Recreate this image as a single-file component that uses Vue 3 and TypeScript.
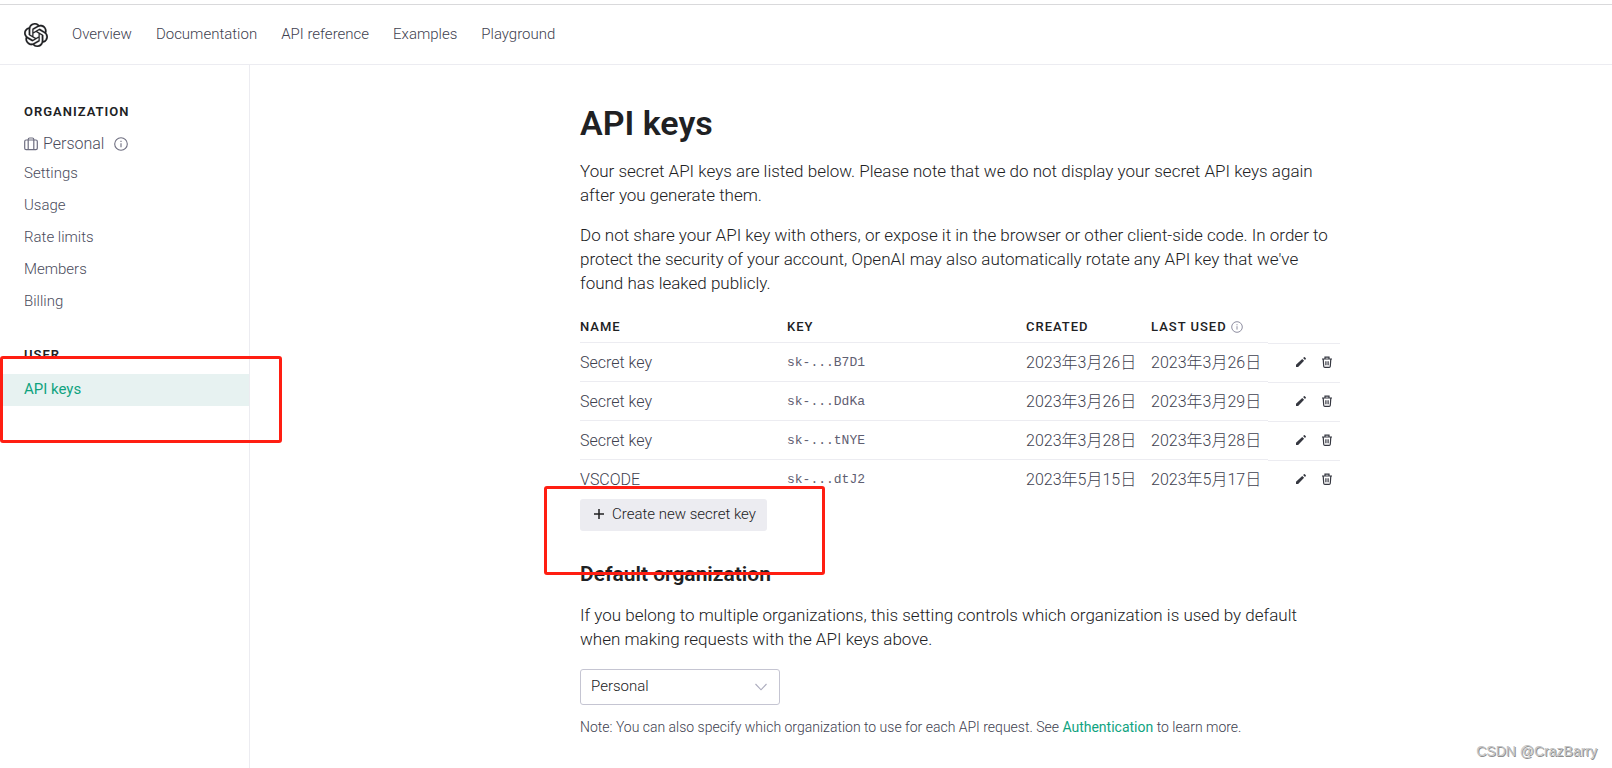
<script setup lang="ts">
import { ref } from 'vue'

interface ApiKey {
  name: string
  token: string
  created: string
  used: string
}

const navLinks: string[] = ['Overview', 'Documentation', 'API reference', 'Examples', 'Playground']
const orgLinks: string[] = ['Settings', 'Usage', 'Rate limits', 'Members', 'Billing']
const keys: ApiKey[] = [
  { name: 'Secret key', token: 'sk-...B7D1', created: '2023年3月26日', used: '2023年3月26日' },
  { name: 'Secret key', token: 'sk-...DdKa', created: '2023年3月26日', used: '2023年3月29日' },
  { name: 'Secret key', token: 'sk-...tNYE', created: '2023年3月28日', used: '2023年3月28日' },
  { name: 'VSCODE', token: 'sk-...dtJ2', created: '2023年5月15日', used: '2023年5月17日' },
]
const organization = ref<string>('Personal')
</script>

<template>
  <div class="page">
    <header class="topbar">
      <a href="#" class="logo" aria-label="OpenAI">
        <svg viewBox="0 0 24 24" width="24" height="24" fill="currentColor" stroke="currentColor" stroke-width="0.2">
          <path d="M22.2819 9.8211a5.9847 5.9847 0 0 0-.5157-4.9108 6.0462 6.0462 0 0 0-6.5098-2.9A6.0651 6.0651 0 0 0 4.9807 4.1818a5.9847 5.9847 0 0 0-3.9977 2.9 6.0462 6.0462 0 0 0 .7427 7.0966 5.98 5.98 0 0 0 .511 4.9107 6.051 6.051 0 0 0 6.5146 2.9001A5.9847 5.9847 0 0 0 13.2599 24a6.0557 6.0557 0 0 0 5.7718-4.2058 5.9894 5.9894 0 0 0 3.9977-2.9001 6.0557 6.0557 0 0 0-.7475-7.0729zm-9.022 12.6081a4.4755 4.4755 0 0 1-2.8764-1.0408l.1419-.0804 4.7783-2.7582a.7948.7948 0 0 0 .3927-.6813v-6.7369l2.02 1.1686a.071.071 0 0 1 .038.052v5.5826a4.504 4.504 0 0 1-4.4945 4.4944zm-9.6607-4.1254a4.4708 4.4708 0 0 1-.5346-3.0137l.142.0852 4.783 2.7582a.7712.7712 0 0 0 .7806 0l5.8428-3.3685v2.3324a.0804.0804 0 0 1-.0332.0615L9.74 19.9502a4.4992 4.4992 0 0 1-6.1408-1.6464zM2.3408 7.8956a4.485 4.485 0 0 1 2.3655-1.9728V11.6a.7664.7664 0 0 0 .3879.6765l5.8144 3.3543-2.0201 1.1685a.0757.0757 0 0 1-.071 0l-4.8303-2.7865A4.504 4.504 0 0 1 2.3408 7.872zm16.5963 3.8558L13.1038 8.364 15.1192 7.2a.0757.0757 0 0 1 .071 0l4.8303 2.7913a4.4944 4.4944 0 0 1-.6765 8.1042v-5.6772a.79.79 0 0 0-.407-.667zm2.0107-3.0231l-.142-.0852-4.7735-2.7818a.7759.7759 0 0 0-.7854 0L9.409 9.2297V6.8974a.0662.0662 0 0 1 .0284-.0615l4.8303-2.7866a4.4992 4.4992 0 0 1 6.6802 4.66zM8.3065 12.863l-2.02-1.1638a.0804.0804 0 0 1-.038-.0567V6.0742a4.4992 4.4992 0 0 1 7.3757-3.4537l-.142.0805L8.704 5.459a.7948.7948 0 0 0-.3927.6813zm1.0976-2.3654l2.602-1.4998 2.6069 1.4998v2.9994l-2.5974 1.4997-2.6067-1.4997Z" />
        </svg>
      </a>
      <nav class="nav">
        <a v-for="link in navLinks" :key="link" href="#">{{ link }}</a>
      </nav>
    </header>

    <div class="body">
      <aside class="sidebar">
        <h2 class="side-title">Organization</h2>
        <div class="org">
          <svg viewBox="0 0 14 14" width="14" height="14" fill="none" stroke="currentColor" stroke-width="1.2">
            <rect x="0.7" y="3" width="12.6" height="9.6" rx="1.4" />
            <path d="M4.2 12.6V2.4Q4.2 1 5.6 1h2.8q1.4 0 1.4 1.4v10.2" />
          </svg>
          <span>Personal</span>
          <svg class="org-info" viewBox="0 0 14 14" width="14" height="14" fill="none" stroke="currentColor" stroke-width="1.1">
            <circle cx="7" cy="7" r="6.3" />
            <path d="M7 6.2v4M7 3.8v1.2" />
          </svg>
        </div>
        <nav class="side-nav">
          <a v-for="link in orgLinks" :key="link" href="#">{{ link }}</a>
        </nav>
        <h2 class="side-title user-title">User</h2>
        <nav class="side-nav user-nav">
          <a href="#" class="active" aria-current="page">API keys</a>
        </nav>
      </aside>

      <main class="main">
        <div class="content">
          <h1>API keys</h1>
          <p>Your secret API keys are listed below. Please note that we do not display your secret API keys again<br>after you generate them.</p>
          <p>Do not share your API key with others, or expose it in the browser or other client-side code. In order to<br>protect the security of your account, OpenAI may also automatically rotate any API key that we've<br>found has leaked publicly.</p>

          <table class="keys">
            <thead>
              <tr>
                <th class="c-name" scope="col">Name</th>
                <th class="c-key" scope="col">Key</th>
                <th class="c-created" scope="col">Created</th>
                <th class="c-used" scope="col">
                  <span class="used-label">Last used
                    <svg viewBox="0 0 12 12" width="12" height="12" fill="none" stroke="currentColor">
                      <circle cx="6" cy="6" r="5.3" />
                      <path d="M6 5.2v3.4M6 3.2v1.1" />
                    </svg>
                  </span>
                </th>
                <td class="c-actions"></td>
              </tr>
            </thead>
            <tbody>
              <tr v-for="item in keys" :key="item.token">
                <td>{{ item.name }}</td>
                <td class="token">{{ item.token }}</td>
                <td>{{ item.created }}</td>
                <td>{{ item.used }}</td>
                <td class="c-actions">
                  <div class="actions">
                    <button type="button" :aria-label="'Edit ' + item.token">
                      <svg viewBox="0 0 12 12" width="12" height="12" fill="currentColor">
                        <path d="M1 8.8 7.2 2.9 9.1 4.8 3.1 11H1zM8.1 2.1l.9-.8q.4-.4.9 0l.9.9q.4.4 0 .9l-.8.9z" />
                      </svg>
                    </button>
                    <button type="button" :aria-label="'Delete ' + item.token">
                      <svg viewBox="0 0 12 12" width="12" height="12" fill="none" stroke="currentColor" stroke-width="1.2">
                        <path d="M1 3h10M4 3V1.1h4V3M2.2 3l.5 7.2q.1 1.1 1.2 1.1h4.2q1.1 0 1.2-1.1L9.8 3M4.9 5.2v4M7.1 5.2v4" />
                      </svg>
                    </button>
                  </div>
                </td>
              </tr>
            </tbody>
          </table>

          <button type="button" class="create">
            <svg viewBox="0 0 10 10" width="10" height="10" fill="none" stroke="currentColor" stroke-width="1.5">
              <path d="M5 0v10M0 5h10" />
            </svg>
            Create new secret key
          </button>

          <h2 id="default-org">Default organization</h2>
          <p>If you belong to multiple organizations, this setting controls which organization is used by default<br>when making requests with the API keys above.</p>

          <div class="select">
            <select v-model="organization" aria-labelledby="default-org">
              <option>Personal</option>
            </select>
            <svg viewBox="0 0 12 8" width="12" height="8" fill="none" stroke="currentColor" stroke-width="1.1">
              <path d="M0.5 1 6 6.8 11.5 1" />
            </svg>
          </div>
          <p class="note">Note: You can also specify which organization to use for each API request. See <a href="#">Authentication</a> to learn more.</p>
        </div>
      </main>
    </div>

    <div class="mark mark-side"></div>
    <div class="mark mark-create"></div>
    <div class="credit">CSDN @CrazBarry</div>
  </div>
</template>

<style>
body {
  margin: 0;
  background: #fff;
}
</style>

<style scoped>
.page {
  position: relative;
  box-sizing: border-box;
  min-height: 100vh;
  padding-top: 4px;
  display: flex;
  flex-direction: column;
  font-family: Roboto, "Noto Sans CJK SC", sans-serif;
  font-weight: 300;
  color: #202123;
}
a {
  text-decoration: none;
  color: inherit;
}
button {
  font: inherit;
  border: 0;
  cursor: pointer;
}
.topbar {
  display: flex;
  align-items: center;
  gap: 24px;
  height: 59px;
  padding: 0 24px;
  border-top: 1px solid #d9d9db;
  border-bottom: 1px solid #ececf1;
}
.logo {
  display: flex;
  color: #202123;
}
.nav {
  display: flex;
  gap: 24px;
  padding-bottom: 2px;
  font-size: 15px;
  line-height: 20px;
  color: #40414f;
}
.body {
  flex: 1;
  display: flex;
}
.sidebar {
  box-sizing: border-box;
  flex: none;
  width: 250px;
  padding-top: 37px;
  border-right: 1px solid #ececf1;
  color: #4a4b5c;
}
.side-title {
  margin: 0;
  padding-left: 24px;
  font-size: 13px;
  line-height: 20px;
  font-weight: 600;
  letter-spacing: 1px;
  text-transform: uppercase;
  color: #202123;
}
.org {
  display: flex;
  align-items: center;
  gap: 5px;
  margin-top: 10px;
  padding-left: 24px;
  font-size: 16px;
  line-height: 24px;
}
.org svg {
  color: #6e6e80;
}
.org-info {
  margin-left: 5px;
}
.side-nav {
  display: flex;
  flex-direction: column;
  margin-top: 1px;
  font-size: 15px;
  line-height: 32px;
}
.side-nav a {
  padding-left: 24px;
}
.user-title {
  margin-top: 28px;
}
.user-nav {
  margin-top: 9px;
}
.side-nav .active {
  padding-bottom: 2px;
  line-height: 30px;
  background: #e7f2f1;
  color: #10a37f;
  font-weight: 400;
}
.main {
  flex: 1;
  display: flex;
  justify-content: center;
  padding: 38px 0 24px 58px;
}
.content {
  width: 760px;
}
h1 {
  margin: 0 0 16px;
  font-size: 34px;
  line-height: 40px;
  font-weight: 600;
  color: #202123;
}
p {
  margin: 0 0 16px;
  font-size: 17px;
  line-height: 24px;
}
.keys {
  width: 100%;
  table-layout: fixed;
  border-collapse: separate;
  border-spacing: 0;
  font-size: 16px;
  line-height: 20px;
  color: #40414f;
}
.keys th {
  height: 31px;
  padding: 0;
  border-bottom: 1px solid #ececf1;
  text-align: left;
  font-size: 13px;
  font-weight: 500;
  letter-spacing: 1px;
  text-transform: uppercase;
  color: #202123;
}
.c-name {
  width: 207px;
}
.c-key {
  width: 239px;
}
.c-created {
  width: 125px;
}
.c-used {
  width: 117px;
}
.used-label {
  display: flex;
  align-items: center;
  gap: 4px;
}
.used-label svg {
  color: #8e8ea0;
}
.keys td {
  box-sizing: border-box;
  padding: 0;
  white-space: nowrap;
}
.keys tbody td {
  height: 39px;
  padding-top: 2px;
  border-bottom: 1px solid #ececf1;
}
.keys tbody tr:last-child td {
  height: 38px;
  border-bottom: 0;
}
.keys tbody .c-actions {
  padding-top: 0;
  border-top: 1px solid #ececf1;
  border-bottom: 0;
}
.keys .token {
  font-family: "Liberation Mono", monospace;
  font-size: 13px;
  color: #5f6072;
}
.actions {
  display: flex;
  justify-content: flex-end;
  gap: 14px;
  padding: 0 7px 2px 0;
}
.actions button {
  display: flex;
  padding: 0;
  background: none;
  color: #353740;
}
.create {
  display: flex;
  align-items: center;
  gap: 8px;
  margin-top: 1px;
  padding: 0 11px 2px 14px;
  border-radius: 3px;
  background: #ececf1;
  color: #202123;
  font-size: 15px;
  line-height: 30px;
}
h2#default-org {
  margin: 28px 0 14px;
  font-size: 21px;
  line-height: 30px;
  font-weight: 600;
  color: #202123;
}
.select {
  position: relative;
  display: flex;
  align-items: center;
  width: 200px;
  margin-top: 18px;
  color: #acacbe;
}
.select select {
  appearance: none;
  width: 100%;
  height: 36px;
  padding: 0 32px 2px 10px;
  border: 1px solid #c5c5d2;
  border-radius: 3px;
  background: #fff;
  font: inherit;
  font-size: 15px;
  color: #202123;
}
.select svg {
  position: absolute;
  right: 13px;
  pointer-events: none;
}
.note {
  margin: 12px 0 0;
  font-size: 14px;
  line-height: 20px;
  color: #40414f;
}
.note a {
  font-weight: 400;
  color: #10a37f;
}
.mark {
  position: absolute;
  box-sizing: border-box;
  border: 3px solid #ff1e12;
  border-radius: 3px;
  pointer-events: none;
}
.mark-side {
  left: 0;
  top: 356px;
  width: 282px;
  height: 87px;
}
.mark-create {
  left: 544px;
  top: 486px;
  width: 281px;
  height: 89px;
}
.credit {
  position: absolute;
  right: 15px;
  bottom: 8px;
  font-family: "Liberation Sans", Arial, sans-serif;
  font-size: 14px;
  line-height: 18px;
  font-weight: 400;
  color: #c4c4c4;
  text-shadow: 1px 1px 0 #8f8f8f;
}
</style>
